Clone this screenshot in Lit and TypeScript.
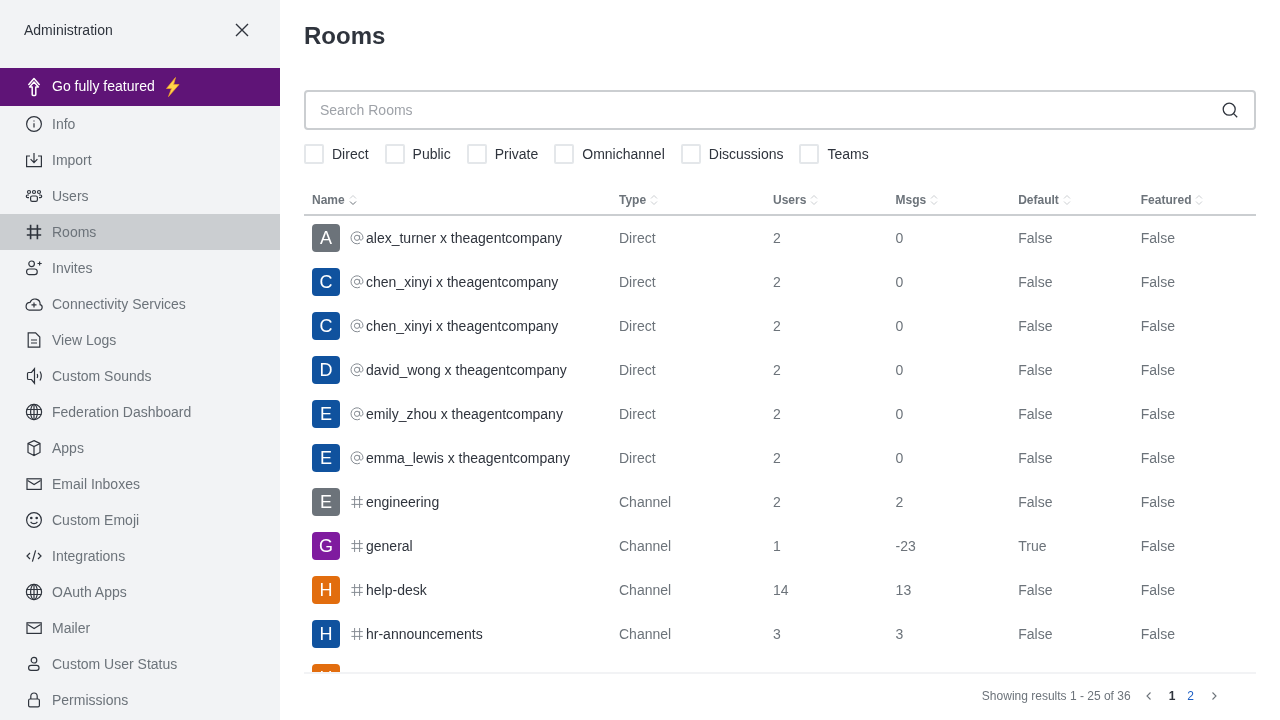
import { LitElement, html, css, svg } from 'lit';
import { customElement } from 'lit/decorators.js';

const navIcons: Record<string, unknown> = {
  info: svg`<circle cx="10" cy="10" r="7.4"/><path d="M10 9.2v4.2M10 6.4v1"/>`,
  import: svg`<path d="M6 6H2.6v10.6h14.8V6H14M10 3v9.6M6.6 9.2l3.4 3.4 3.4-3.4"/>`,
  users: svg`<circle cx="5" cy="6" r="1.5"/><circle cx="10" cy="6" r="1.5"/><circle cx="15" cy="6" r="1.5"/><rect x="6.6" y="10" width="6.8" height="5.4" rx="1.6"/><path d="M5 9H3.6a1.3 1.3 0 0 0-1.3 1.3c0 .8.6 1.3 1.3 1.3H5M15 9h1.4a1.3 1.3 0 0 1 1.3 1.3c0 .8-.6 1.3-1.3 1.3H15"/>`,
  hash: svg`<path d="M6.6 2.8v14.4M13.4 2.8v14.4M2.8 7h14.4M2.8 13h14.4" stroke-width="1.6"/>`,
  invites: svg`<circle cx="7.6" cy="5.8" r="2.8"/><rect x="2.6" y="11" width="10.6" height="5.6" rx="2.6"/><path d="M15.6 3.4v4.2M13.5 5.5h4.2"/>`,
  cloud: svg`<path d="M5.2 16.2h10.2a2.8 2.8 0 0 0 .7-5.5 5.2 5.2 0 0 0-10-2.4 4 4 0 0 0-.9 7.9ZM10 8.4v5M7.5 10.9h5"/>`,
  logs: svg`<path d="M4.2 2.9h7.4l4.2 4.2v10H4.2ZM7 10h6M7 13h6"/>`,
  sounds: svg`<path d="M7.5 6.5H4.5a1 1 0 0 0-1 1v5a1 1 0 0 0 1 1h3l3 3.7V2.8ZM13.2 8c.6 1.3.6 2.7 0 4M16 5.5c1.6 2.8 1.6 6.2 0 9"/>`,
  globe: svg`<circle cx="10" cy="10" r="7.6"/><ellipse cx="10" cy="10" rx="3.4" ry="7.6"/><path d="M10 2.4v15.2M2.6 7.5h14.8M2.6 12.5h14.8"/>`,
  apps: svg`<path d="M10 2.6l6 2.9v9l-6 3-6-3v-9ZM4 5.5l6 3 6-3M10 8.5v9"/>`,
  mail: svg`<rect x="3" y="4.8" width="14.2" height="10.6"/><path d="M3.6 6.6l6.5 4 6.5-4"/>`,
  emoji: svg`<circle cx="10" cy="10" r="7.4"/><path d="M6.6 11.8c1.6 2.4 5.2 2.4 6.8 0" /><circle cx="7.3" cy="8" r=".7" fill="currentColor"/><circle cx="12.7" cy="8" r=".7" fill="currentColor"/>`,
  code: svg`<path d="M6 7l-3 3 3 3M14 7l3 3-3 3M11.6 4.4l-3.2 11.2"/>`,
  user: svg`<circle cx="10" cy="6.2" r="2.8"/><rect x="4.6" y="11.4" width="10.4" height="5" rx="2.4"/>`,
  lock: svg`<rect x="4.6" y="9" width="10.8" height="7.8" rx="1.4"/><path d="M6.8 9V6.2a3.2 3.2 0 0 1 6.4 0V9"/>`,
};

const navItems = [
  ['info', 'Info'],
  ['import', 'Import'],
  ['users', 'Users'],
  ['hash', 'Rooms'],
  ['invites', 'Invites'],
  ['cloud', 'Connectivity Services'],
  ['logs', 'View Logs'],
  ['sounds', 'Custom Sounds'],
  ['globe', 'Federation Dashboard'],
  ['apps', 'Apps'],
  ['mail', 'Email Inboxes'],
  ['emoji', 'Custom Emoji'],
  ['code', 'Integrations'],
  ['globe', 'OAuth Apps'],
  ['mail', 'Mailer'],
  ['user', 'Custom User Status'],
  ['lock', 'Permissions'],
];

const GREY = '#6c737a';
const BLUE = '#10529e';
const PURPLE = '#7f1b9f';
const ORANGE = '#e26d0e';

// name, avatar colour, type, users, msgs, default
const rooms: [string, string, string, number, number, string][] = [
  ['alex_turner x theagentcompany', GREY, 'Direct', 2, 0, 'False'],
  ['chen_xinyi x theagentcompany', BLUE, 'Direct', 2, 0, 'False'],
  ['chen_xinyi x theagentcompany', BLUE, 'Direct', 2, 0, 'False'],
  ['david_wong x theagentcompany', BLUE, 'Direct', 2, 0, 'False'],
  ['emily_zhou x theagentcompany', BLUE, 'Direct', 2, 0, 'False'],
  ['emma_lewis x theagentcompany', BLUE, 'Direct', 2, 0, 'False'],
  ['engineering', GREY, 'Channel', 2, 2, 'False'],
  ['general', PURPLE, 'Channel', 1, -23, 'True'],
  ['help-desk', ORANGE, 'Channel', 14, 13, 'False'],
  ['hr-announcements', BLUE, 'Channel', 3, 3, 'False'],
];

const filters = ['Direct', 'Public', 'Private', 'Omnichannel', 'Discussions', 'Teams'];
const columns = ['Name', 'Type', 'Users', 'Msgs', 'Default', 'Featured'];

@customElement('app-root')
export class AppRoot extends LitElement {
  static styles = css`
    :host {
      display: flex;
      width: 1280px;
      height: 720px;
      overflow: hidden;
      background: #fff;
      font-family: 'Liberation Sans', Arial, sans-serif;
      font-size: 14px;
      color: #2f343d;
    }

    .sidebar {
      width: 280px;
      flex: none;
      background: #f2f3f5;
      overflow: hidden;
    }

    /* own layer so the text gets greyscale antialiasing, as in the reference */
    .label {
      will-change: transform;
    }

    .side-head {
      height: 60px;
      padding: 0 28px 0 24px;
      margin-bottom: 8px;
      display: flex;
      align-items: center;
      justify-content: space-between;
    }

    .side-head svg {
      width: 20px;
      height: 20px;
      fill: none;
      stroke: #2f343d;
      stroke-width: 1.4;
    }

    .upgrade {
      height: 38px;
      padding-left: 24px;
      display: flex;
      align-items: center;
      gap: 8px;
      background: #5f1477;
      color: #fff;
    }

    .upgrade span {
      margin-bottom: 2px;
    }

    .upgrade svg.arrow {
      width: 20px;
      height: 20px;
      fill: none;
      stroke: #fff;
      stroke-width: 1.5;
      stroke-linejoin: round;
    }

    .upgrade svg.bolt {
      width: 18px;
      height: 20px;
    }

    .nav-item {
      height: 36px;
      padding-left: 24px;
      display: flex;
      align-items: center;
      gap: 8px;
      color: #6c737a;
    }

    .nav-item.active {
      background: #cbced1;
    }

    .nav-item svg {
      width: 20px;
      height: 20px;
      flex: none;
      fill: none;
      stroke: #2f343d;
      color: #2f343d;
      stroke-width: 1.2;
    }

    .main {
      flex: 1;
      min-width: 0;
      padding: 0 24px;
      display: flex;
      flex-direction: column;
      will-change: transform;
    }

    h1 {
      margin: 0;
      height: 90px;
      padding-top: 20px;
      box-sizing: border-box;
      font-size: 24px;
      line-height: 32px;
      font-weight: 700;
    }

    .search {
      height: 40px;
      box-sizing: border-box;
      flex: none;
      padding: 0 14px;
      border: 2px solid #cbced1;
      border-radius: 4px;
      display: flex;
      align-items: center;
      justify-content: space-between;
      color: #9ea2a8;
    }

    .search svg {
      width: 20px;
      height: 20px;
      fill: none;
      stroke: #2f343d;
      stroke-width: 1.3;
    }

    .filters {
      display: flex;
      gap: 16px;
      margin-top: 14px;
      height: 42px;
      flex: none;
    }

    .filter {
      display: flex;
      align-items: center;
      gap: 8px;
      height: 20px;
      color: #2f343d;
    }

    .box {
      width: 20px;
      height: 20px;
      box-sizing: border-box;
      border: 2px solid #e4e7ea;
      border-radius: 2px;
    }

    .row {
      display: grid;
      grid-template-columns: 307px 154px 122.6px 122.6px 122.6px 123.2px;
    }

    .row > div {
      padding: 0 8px;
      display: flex;
      align-items: center;
      min-width: 0;
    }

    .table-head {
      height: 30px;
      box-sizing: border-box;
      flex: none;
      border-bottom: 2px solid #cbced1;
      font-size: 12px;
      font-weight: 700;
      color: #6c737a;
    }

    .table-head svg {
      width: 8px;
      height: 12px;
      margin-left: 4px;
      fill: none;
      stroke: #cbced1;
      stroke-width: 1;
    }

    .table-head svg .dark {
      stroke: #6c737a;
    }

    .rows {
      flex: 1;
      min-height: 0;
      overflow: hidden;
    }

    .room {
      height: 44px;
      color: #6c737a;
    }

    .avatar {
      width: 28px;
      height: 28px;
      flex: none;
      border-radius: 4px;
      color: #fff;
      font-size: 18px;
      display: flex;
      align-items: center;
      justify-content: center;
    }

    .kind {
      width: 16px;
      height: 16px;
      flex: none;
      margin: 0 0 0 10px;
      fill: none;
      stroke: #868c93;
      stroke-width: 1;
    }

    .kind.direct {
      margin: -1px 0 0 9px;
    }

    .room-name {
      color: #2f343d;
      white-space: nowrap;
    }

    .direct + .room-name {
      margin-left: 1px;
    }

    .pager {
      height: 48px;
      flex: none;
      box-sizing: border-box;
      border-top: 2px solid #f2f3f5;
      padding: 0 36px 2px 0;
      display: flex;
      align-items: center;
      justify-content: flex-end;
      font-size: 12px;
      color: #6c737a;
    }

    .pager svg {
      width: 12px;
      height: 12px;
      fill: none;
      stroke: #6c737a;
      stroke-width: 1.1;
    }

    .pager .prev {
      margin: 0 14px 0 12px;
    }

    .pager .next {
      margin-left: 14px;
    }

    .pager b {
      color: #2f343d;
      margin-right: 12px;
    }

    .pager .link {
      color: #1d5fc4;
    }
  `;

  renderKind(type: string) {
    if (type === 'Direct') {
      return html`<svg class="kind direct" viewBox="0 0 16 16">
        <circle cx="8" cy="7.8" r="2.6" />
        <path d="M10.6 5.4v3.4c0 1.9 3.4 1.6 3.4-1A6 6 0 1 0 11 13" />
      </svg>`;
    }
    return html`<svg class="kind" viewBox="0 0 16 16">
      <path d="M4.6 2v12M9.6 2v12M1.4 5.6h11.4M1.4 10.4h11.4" />
    </svg>`;
  }

  render() {
    return html`
      <aside class="sidebar">
        <div class="side-head">
          <span class="label">Administration</span>
          <svg viewBox="0 0 20 20"><path d="M4 4l12 12M16 4L4 16" /></svg>
        </div>
        <div class="upgrade">
          <svg class="arrow" viewBox="0 0 20 20">
            <path d="M4.4 8L10 1.6 15.6 8" />
            <path d="M10 5L5.6 10h2.6v7.6a.8.8 0 0 0 .8.8h2a.8.8 0 0 0 .8-.8V10h2.6Z" />
          </svg>
          <span class="label">Go fully featured</span>
          <svg class="bolt" viewBox="0 0 18 20">
            <path d="M12.5.5L3.5 11.5H8.5L5.5 19.6 16 7.6h-5.4Z" fill="#ffd54a" stroke="#f4a425" stroke-width=".7" />
          </svg>
        </div>
        ${navItems.map(
          ([icon, label]) => html`
            <div class="nav-item ${label === 'Rooms' ? 'active' : ''}">
              <svg viewBox="0 0 20 20">${navIcons[icon]}</svg>
              <span class="label">${label}</span>
            </div>
          `,
        )}
      </aside>

      <main class="main">
        <h1>Rooms</h1>
        <div class="search">
          <span>Search Rooms</span>
          <svg viewBox="0 0 20 20">
            <circle cx="9.2" cy="9.2" r="6" />
            <path d="M13.6 13.6l3.6 3.6" />
          </svg>
        </div>
        <div class="filters">
          ${filters.map(
            (f) => html`<label class="filter"><span class="box"></span>${f}</label>`,
          )}
        </div>
        <div class="row table-head">
          ${columns.map(
            (c, i) => html`<div>
              ${c}
              <svg viewBox="0 0 8 12">
                <path d="M1 4.5L4 1.5l3 3" />
                <path class=${i === 0 ? 'dark' : ''} d="M1 7.5l3 3 3-3" />
              </svg>
            </div>`,
          )}
        </div>
        <div class="rows">
          ${rooms.map(
            ([name, color, type, users, msgs, def]) => html`
              <div class="row room">
                <div>
                  <span class="avatar" style="background:${color}">${name[0].toUpperCase()}</span>
                  ${this.renderKind(type)}
                  <span class="room-name">${name}</span>
                </div>
                <div>${type}</div>
                <div>${users}</div>
                <div>${msgs}</div>
                <div>${def}</div>
                <div>False</div>
              </div>
            `,
          )}
          <div class="row room">
            <div><span class="avatar" style="background:${ORANGE}">H</span></div>
          </div>
        </div>
        <div class="pager">
          <span>Showing results 1 - 25 of 36</span>
          <svg class="prev" viewBox="0 0 12 12"><path d="M7.5 2.5L4 6l3.5 3.5" /></svg>
          <b>1</b>
          <span class="link">2</span>
          <svg class="next" viewBox="0 0 12 12"><path d="M4.5 2.5L8 6l-3.5 3.5" /></svg>
        </div>
      </main>
    `;
  }
}
